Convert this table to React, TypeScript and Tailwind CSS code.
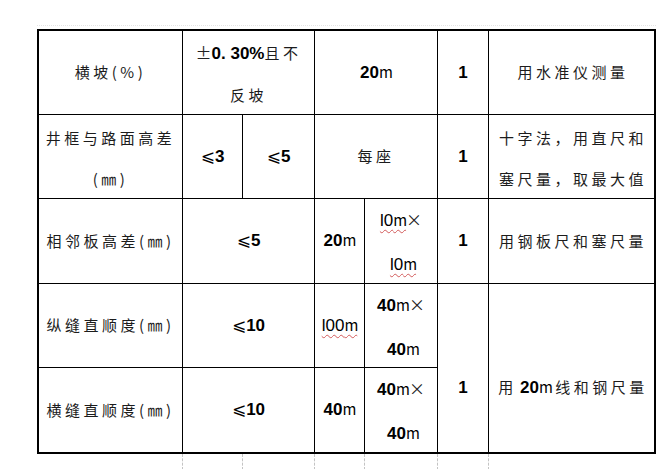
import React from "react";

const cjk = "font-['Noto_Sans_CJK_SC',sans-serif] text-[15px] tracking-[3.5px] text-[#1c1c1c]";
const num = "font-['Liberation_Sans','Noto_Sans_CJK_SC',sans-serif] font-bold text-[17px] text-black tracking-normal";
const le = "font-['DejaVu_Sans',sans-serif] font-normal";

function Cell({ className = "", children }: { className?: string; children: React.ReactNode }) {
  return (
    <div className={`bg-white flex flex-col items-center justify-center text-center ${className}`}>
      {children}
    </div>
  );
}

// number with a narrow "m" unit taken from the CJK face
function Meter({ v, bold = true, wavy = false }: { v: string; bold?: boolean; wavy?: boolean }) {
  return (
    <span
      className={`${bold ? num : "font-['Liberation_Sans',sans-serif] text-[17px] text-black tracking-normal"} ${
        wavy ? "underline decoration-wavy decoration-[#d25a5a] decoration-1 underline-offset-[3px]" : ""
      }`}
    >
      {v}
      <span className="font-['Noto_Sans_CJK_SC',sans-serif] font-normal text-[15px] tracking-[-1px]">m</span>
    </span>
  );
}

function Leq({ v }: { v: string }) {
  return (
    <span className={num}>
      <span className={le}>⩽</span>
      {v}
    </span>
  );
}

function Times() {
  return <span className="font-['Noto_Sans_CJK_SC',sans-serif] font-normal text-[16px] text-[#222]">×</span>;
}

export default function App() {
  return (
    <div className="min-h-[469px] w-[672px] bg-white pt-[25px] overflow-hidden">
      <div className="ml-[37px] w-[619px] h-[4px] border-t border-dotted border-[#e4e4e4]" />
      <div className="ml-[37px] w-[619px] grid grid-cols-[143px_59px_71px_49px_72px_50px_165px] grid-rows-[83px_83px_84px_83px_84px] gap-px bg-black border-2 border-black">
        {/* row 1 */}
        <Cell className={cjk}>横坡(%)</Cell>
        <Cell className="col-span-2 leading-[41px] pt-[2px]">
          <div>
            <span className="font-['Noto_Sans_CJK_SC',sans-serif] text-[16px] text-[#222]">±</span>
            <span className={num}>0. 30%</span>
            <span className={cjk}>且不</span>
          </div>
          <div className={cjk}>反坡</div>
        </Cell>
        <Cell className="col-span-2">
          <Meter v="20" />
        </Cell>
        <Cell className={num}>1</Cell>
        <Cell className={`${cjk} pl-[3px]`}>用水准仪测量</Cell>

        {/* row 2 */}
        <Cell className={`${cjk} leading-[41px] pt-[2px]`}>
          <div>井框与路面高差</div>
          <div>(㎜)</div>
        </Cell>
        <Cell>
          <Leq v="3" />
        </Cell>
        <Cell>
          <Leq v="5" />
        </Cell>
        <Cell className={`col-span-2 ${cjk}`}>每座</Cell>
        <Cell className={num}>1</Cell>
        <Cell className={`${cjk} leading-[41px] pt-[2px] pl-[3px]`}>
          <div>十字法，用直尺和</div>
          <div>塞尺量，取最大值</div>
        </Cell>

        {/* row 3 */}
        <Cell className={`${cjk} tracking-[2.5px]`}>相邻板高差(㎜)</Cell>
        <Cell className="col-span-2">
          <Leq v="5" />
        </Cell>
        <Cell>
          <Meter v="20" />
        </Cell>
        <Cell className="leading-[43px] pt-[2px]">
          <div>
            <Meter v="l0" bold={false} wavy />
            <Times />
          </div>
          <div className="pl-[4px]">
            <Meter v="l0" bold={false} wavy />
          </div>
        </Cell>
        <Cell className={num}>1</Cell>
        <Cell className={`${cjk} pl-[3px]`}>用钢板尺和塞尺量</Cell>

        {/* row 4 */}
        <Cell className={`${cjk} tracking-[2.5px]`}>纵缝直顺度(㎜)</Cell>
        <Cell className="col-span-2">
          <Leq v="10" />
        </Cell>
        <Cell>
          <Meter v="l00" bold={false} wavy />
        </Cell>
        <Cell className="leading-[43px] pt-[2px]">
          <div>
            <Meter v="40" />
            <Times />
          </div>
          <div className="pl-[4px]">
            <Meter v="40" />
          </div>
        </Cell>
        <Cell className={`row-span-2 pt-[40px] ${num}`}>1</Cell>
        <Cell className={`row-span-2 pt-[40px] ${cjk} pl-[3px]`}>
          <div>
            用<span className="tracking-normal"> </span>
            <Meter v="20" />
            <span className="tracking-normal"> </span>线和钢尺量
          </div>
        </Cell>

        {/* row 5 */}
        <Cell className={`${cjk} tracking-[2.5px]`}>横缝直顺度(㎜)</Cell>
        <Cell className="col-span-2">
          <Leq v="10" />
        </Cell>
        <Cell>
          <Meter v="40" />
        </Cell>
        <Cell className="leading-[43px] pt-[2px]">
          <div>
            <Meter v="40" />
            <Times />
          </div>
          <div className="pl-[4px]">
            <Meter v="40" />
          </div>
        </Cell>
      </div>
      {/* faint table gridline marks below the table */}
      <div className="ml-[39px] h-[16px] flex">
        <div className="w-[144px] border-r border-dashed border-[#c4c4c4]" />
        <div className="w-[60px] border-r border-dashed border-[#c4c4c4]" />
        <div className="w-[72px] border-r border-dashed border-[#c4c4c4]" />
        <div className="w-[50px] border-r border-dashed border-[#c4c4c4]" />
        <div className="w-[73px] border-r border-dashed border-[#c4c4c4]" />
        <div className="w-[51px] border-r border-dashed border-[#c4c4c4]" />
      </div>
    </div>
  );
}
